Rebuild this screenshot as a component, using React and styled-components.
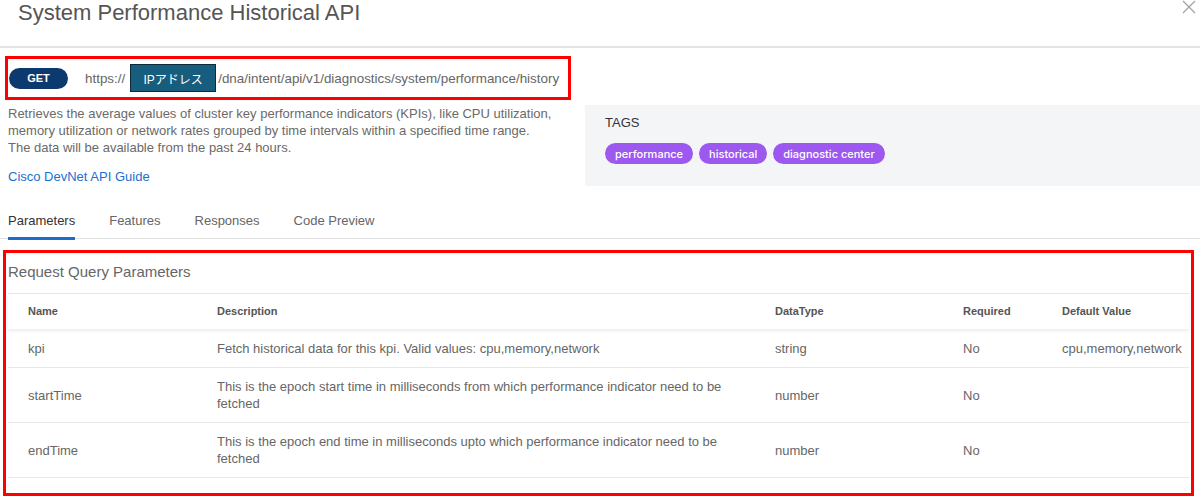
import React from 'react';
import styled, { createGlobalStyle } from 'styled-components';

const GlobalStyle = createGlobalStyle`
	body {
		margin: 0;
		background: #fff;
		font-family: 'Liberation Sans', Arial, sans-serif;
		color: #666;
	}
`;

const Page = styled.div`
	width: 1200px;
	height: 500px;
	overflow: hidden;
`;

const Header = styled.header`
	display: flex;
	justify-content: space-between;
	align-items: flex-start;
	height: 46px;
	padding-left: 18px;
	border-bottom: 2px solid #e4e4e6;
`;

const Title = styled.h1`
	margin: 0;
	font-size: 22px;
	font-weight: normal;
	line-height: 26px;
	color: #555;
`;

const CloseButton = styled.button`
	border: 0;
	background: none;
	padding: 0;
	margin: 0 4px 0 0;
	width: 14px;
	height: 14px;
	cursor: pointer;
`;

const Highlight = styled.div`
	border: 3px solid #f00;
	box-sizing: border-box;
`;

const UrlBox = styled(Highlight)`
	display: flex;
	align-items: center;
	width: 566px;
	height: 44px;
	margin: 8px 0 0 5px;
	padding-left: 1px;
`;

const MethodPill = styled.span`
	display: inline-flex;
	align-items: center;
	justify-content: center;
	width: 59px;
	height: 21px;
	border-radius: 11px;
	background: #0c3a6e;
	color: #fff;
	font-size: 11px;
	font-weight: bold;
`;

const UrlText = styled.span`
	display: flex;
	align-items: center;
	margin-left: 17px;
	font-size: 13.4px;
	color: #666;
`;

const HostBox = styled.span`
	display: inline-flex;
	align-items: center;
	justify-content: center;
	width: 86px;
	height: 28px;
	box-sizing: border-box;
	margin: 0 2px 0 5px;
	background: #175d7e;
	border: 1.5px solid #0e2a3a;
	color: #fff;
	font-size: 12px;
	font-family: 'Liberation Sans', 'Noto Sans CJK JP', sans-serif;
`;

const InfoRow = styled.div`
	display: flex;
	margin-top: 5px;
`;

const Summary = styled.div`
	width: 577px;
	padding-left: 8px;
`;

const Description = styled.p`
	margin: 0;
	font-size: 13px;
	line-height: 17px;
	color: #6a6a6a;
`;

const GuideLink = styled.a`
	display: inline-block;
	margin-top: 13px;
	font-size: 13px;
	color: #1a6fd0;
	text-decoration: none;
`;

const TagsPanel = styled.div`
	flex: 1;
	height: 81px;
	box-sizing: border-box;
	padding: 11px 20px;
	background: #f4f5f7;
`;

const TagsLabel = styled.div`
	font-size: 13px;
	line-height: 14px;
	color: #333;
`;

const TagList = styled.div`
	display: flex;
	gap: 6px;
	margin-top: 13px;
`;

const Tag = styled.span`
	display: inline-flex;
	align-items: center;
	height: 21px;
	padding: 0 10px;
	border-radius: 11px;
	background: #9d58f0;
	color: #fff;
	font-family: Inter, sans-serif;
	font-size: 11px;
	font-weight: 500;
`;

const Tabs = styled.nav`
	display: flex;
	gap: 34px;
	margin-top: 27px;
	padding-left: 8px;
	border-bottom: 1px solid #e3e3e3;
`;

const Tab = styled.span`
	padding-bottom: 8px;
	font-size: 13px;
	line-height: 16px;
	color: ${p => (p.active ? '#333' : '#666')};
	border-bottom: 3px solid ${p => (p.active ? '#1d6dc8' : 'transparent')};
	margin-bottom: -2px;
`;

const ParamsBox = styled(Highlight)`
	width: 1191px;
	height: 246px;
	margin: 11px 0 0 3px;
	padding: 0 2px;
`;

const SectionTitle = styled.h2`
	margin: 0;
	padding: 9px 0 0 0;
	height: 31px;
	font-size: 15px;
	font-weight: normal;
	line-height: 20px;
	color: #666;
	border-bottom: 1px solid #e6e6e6;
`;

const Row = styled.div`
	display: grid;
	grid-template-columns: 189px 558px 188px 99px 1fr;
	align-items: center;
	min-height: ${p => (p.tall ? 54 : 38)}px;
	border-bottom: 1px solid #e8e8e8;
	font-size: 13px;
	line-height: 17px;
	color: #666;
`;

const HeadRow = styled(Row)`
	min-height: 35px;
	font-size: 11px;
	font-weight: bold;
	color: #555;
	border-bottom: 0;
	box-shadow: 0 2px 3px rgba(0, 0, 0, 0.08);
`;

const Cell = styled.div`
	padding: 0 20px;
`;

const params = [
	{
		name: 'kpi',
		description: 'Fetch historical data for this kpi. Valid values: cpu,memory,network',
		type: 'string',
		required: 'No',
		def: 'cpu,memory,network',
	},
	{
		name: 'startTime',
		description:
			'This is the epoch start time in milliseconds from which performance indicator need to be fetched',
		type: 'number',
		required: 'No',
		def: '',
		tall: true,
	},
	{
		name: 'endTime',
		description:
			'This is the epoch end time in milliseconds upto which performance indicator need to be fetched',
		type: 'number',
		required: 'No',
		def: '',
		tall: true,
	},
];

const App = () => (
	<Page>
		<GlobalStyle />
		<Header>
			<Title>System Performance Historical API</Title>
			<CloseButton aria-label='close'>
				<svg width='14' height='14' viewBox='0 0 14 14'>
					<path d='M1 1 L13 13 M13 1 L1 13' stroke='#a0a0a0' strokeWidth='1.2' fill='none' />
				</svg>
			</CloseButton>
		</Header>

		<UrlBox>
			<MethodPill>GET</MethodPill>
			<UrlText>
				https://
				<HostBox>IPアドレス</HostBox>
				/dna/intent/api/v1/diagnostics/system/performance/history
			</UrlText>
		</UrlBox>

		<InfoRow>
			<Summary>
				<Description>
					Retrieves the average values of cluster key performance indicators (KPIs), like CPU utilization,
					<br />
					memory utilization or network rates grouped by time intervals within a specified time range.
					<br />
					The data will be available from the past 24 hours.
				</Description>
				<GuideLink href='#'>Cisco DevNet API Guide</GuideLink>
			</Summary>
			<TagsPanel>
				<TagsLabel>TAGS</TagsLabel>
				<TagList>
					<Tag>performance</Tag>
					<Tag>historical</Tag>
					<Tag>diagnostic center</Tag>
				</TagList>
			</TagsPanel>
		</InfoRow>

		<Tabs>
			<Tab active>Parameters</Tab>
			<Tab>Features</Tab>
			<Tab>Responses</Tab>
			<Tab>Code Preview</Tab>
		</Tabs>

		<ParamsBox>
			<SectionTitle>Request Query Parameters</SectionTitle>
			<HeadRow>
				<Cell>Name</Cell>
				<Cell>Description</Cell>
				<Cell>DataType</Cell>
				<Cell>Required</Cell>
				<Cell>Default Value</Cell>
			</HeadRow>
			{params.map(p => (
				<Row key={p.name} tall={p.tall}>
					<Cell>{p.name}</Cell>
					<Cell>{p.description}</Cell>
					<Cell>{p.type}</Cell>
					<Cell>{p.required}</Cell>
					<Cell>{p.def}</Cell>
				</Row>
			))}
		</ParamsBox>
	</Page>
);

export default App;
